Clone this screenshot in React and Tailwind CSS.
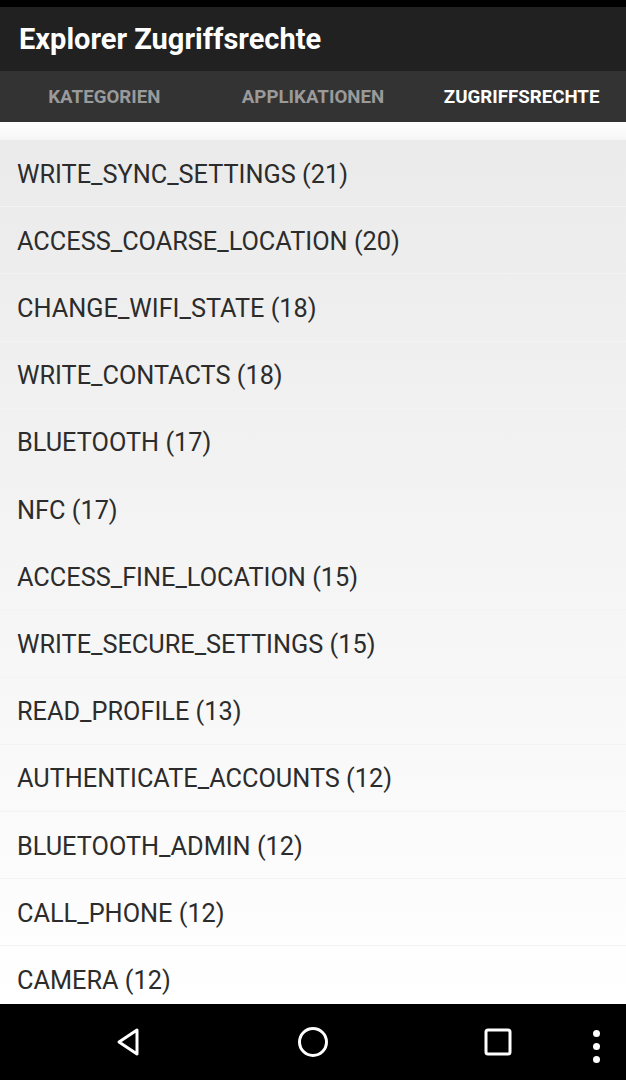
const permissions = [
  "WRITE_SYNC_SETTINGS (21)",
  "ACCESS_COARSE_LOCATION (20)",
  "CHANGE_WIFI_STATE (18)",
  "WRITE_CONTACTS (18)",
  "BLUETOOTH (17)",
  "NFC (17)",
  "ACCESS_FINE_LOCATION (15)",
  "WRITE_SECURE_SETTINGS (15)",
  "READ_PROFILE (13)",
  "AUTHENTICATE_ACCOUNTS (12)",
  "BLUETOOTH_ADMIN (12)",
  "CALL_PHONE (12)",
  "CAMERA (12)",
];

const tabs = ["KATEGORIEN", "APPLIKATIONEN", "ZUGRIFFSRECHTE"];

export default function App() {
  return (
    <div
      className="w-[626px] h-[1080px] flex flex-col overflow-hidden bg-white"
      style={{ fontFamily: "Roboto, 'Liberation Sans', sans-serif" }}
    >
      {/* Statusleiste */}
      <div className="h-[7px] bg-black shrink-0" />

      {/* Toolbar */}
      <div className="h-[64px] bg-[#212121] flex items-center px-[19px] shrink-0">
        <h1 className="text-white text-[29px] font-bold leading-none">
          Explorer Zugriffsrechte
        </h1>
      </div>

      {/* Tabs */}
      <div className="h-[51px] bg-[#333333] grid grid-cols-3 shrink-0">
        {tabs.map((tab, i) => (
          <div
            key={tab}
            className={`flex items-center justify-center pt-[2px] text-[18.7px] font-bold ${
              i === 2 ? "text-white" : "text-[#9a9a9a]"
            }`}
          >
            {tab}
          </div>
        ))}
      </div>

      {/* Liste */}
      <div className="flex-1 overflow-hidden bg-gradient-to-b from-[#eaeaea] to-white">
        <div className="h-[18px] bg-gradient-to-b from-white to-[#f6f6f6] border-b border-[#f4f4f4]" />
        {permissions.map((p) => (
          <div
            key={p}
            className="h-[67.2px] flex items-center px-[17px] pt-[3px] border-b border-[#f3f3f3] text-[25.3px] text-[#2c2c2c]"
          >
            {p}
          </div>
        ))}
      </div>

      {/* Navigationsleiste */}
      <div className="h-[76px] bg-black shrink-0 relative flex items-center">
        <div className="w-full flex items-center">
          <div className="w-[256px] flex justify-center">
            <svg width="26" height="30" viewBox="0 0 26 30">
              <path
                d="M22 3 L4 15 L22 27 Z"
                fill="none"
                stroke="white"
                strokeWidth="3"
                strokeLinejoin="round"
              />
            </svg>
          </div>
          <div className="w-[114px] flex justify-center">
            <svg width="32" height="32" viewBox="0 0 32 32">
              <circle cx="16" cy="16" r="13.5" fill="none" stroke="white" strokeWidth="3" />
            </svg>
          </div>
          <div className="w-[256px] flex justify-center">
            <svg width="28" height="28" viewBox="0 0 28 28">
              <rect x="2" y="2" width="24" height="24" rx="2" fill="none" stroke="white" strokeWidth="3" />
            </svg>
          </div>
        </div>
        <div className="absolute right-[26px] top-[26px] flex flex-col gap-[6px]">
          <span className="w-[7px] h-[7px] rounded-full bg-white" />
          <span className="w-[7px] h-[7px] rounded-full bg-white" />
          <span className="w-[7px] h-[7px] rounded-full bg-white" />
        </div>
      </div>
    </div>
  );
}
